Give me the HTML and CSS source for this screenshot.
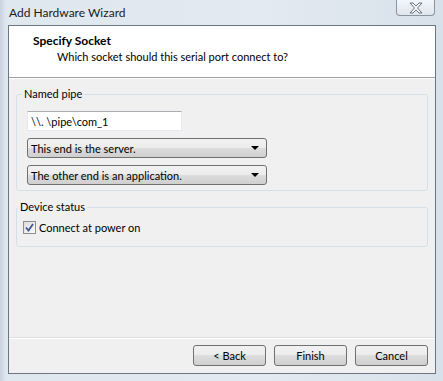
FILE: index.html
```html
<!DOCTYPE html>
<html>
<head>
<meta charset="utf-8">
<link rel="stylesheet" href="styles.css">
</head>
<body>
<div class="window">
  <div class="titlebar">
    <span class="title">Add Hardware Wizard</span>
    <div class="close">
      <svg width="16" height="12" viewBox="0 0 16 12">
        <path d="M2 1 L5 1 L8 4 L11 1 L14 1 L9.5 6 L14 11 L11 11 L8 8 L5 11 L2 11 L6.5 6 Z" fill="#f4f6f8" stroke="#6a7480" stroke-width="1" stroke-linejoin="round"/>
      </svg>
    </div>
  </div>
  <div class="client">
    <div class="header">
      <div class="h-title">Specify Socket</div>
      <div class="h-sub">Which socket should this serial port connect to?</div>
    </div>
    <div class="content">
      <fieldset class="group group-pipe">
        <legend>Named pipe</legend>
        <div class="textbox">\\. \pipe\com_1</div>
        <div class="select"><span>This end is the server.</span><span class="arrow"></span></div>
        <div class="select"><span>The other end is an application.</span><span class="arrow"></span></div>
      </fieldset>
      <fieldset class="group group-status">
        <legend>Device status</legend>
        <div class="check-row">
          <span class="checkbox">
            <svg width="9" height="9" viewBox="0 0 9 9"><path d="M1 4.5 L3.5 7.5 L8 1" fill="none" stroke="#3d5a95" stroke-width="1.8"/></svg>
          </span>
          <span>Connect at power on</span>
        </div>
      </fieldset>
    </div>
    <div class="footer">
      <button class="btn">&lt; Back</button>
      <button class="btn">Finish</button>
      <button class="btn">Cancel</button>
    </div>
  </div>
</div>
</body>
</html>
```
FILE: styles.css
```css
html, body {
  margin: 0;
  padding: 0;
}
body {
  width: 443px;
  height: 381px;
  overflow: hidden;
  font-family: Lato, "Liberation Sans", Arial, sans-serif;
  font-size: 11px;
  color: #000;
}
.window {
  width: 443px;
  height: 381px;
  box-sizing: border-box;
  background: linear-gradient(90deg, #c9d3dd 0px, #dfe7ef 6px, #e3eaf1 60%, #d8e1ea 100%);
  display: flex;
  flex-direction: column;
}
.titlebar {
  height: 25px;
  display: flex;
  align-items: flex-start;
  justify-content: space-between;
  padding-left: 9px;
  padding-right: 8px;
}
.title {
  margin-top: 5px;
  font-size: 12px;
  color: #1b1b1b;
}
.close {
  width: 39px;
  height: 16px;
  box-sizing: border-box;
  border: 1px solid #8a949e;
  border-top: none;
  border-radius: 0 0 4px 4px;
  background: linear-gradient(#f3f6f9, #dfe6ed);
  display: flex;
  align-items: center;
  justify-content: center;
}
.client {
  margin: 0 7px 7px 8px;
  height: 349px;
  box-sizing: border-box;
  border: 1px solid #6a7684;
  background: #f0f0f0;
  display: flex;
  flex-direction: column;
}
.header {
  height: 52px;
  box-sizing: border-box;
  background: #fff;
  border-bottom: 1px solid #a0a0a0;
  padding-left: 24px;
  padding-top: 7px;
}
.h-title {
  font-weight: bold;
  font-size: 12px;
  line-height: 15px;
}
.h-sub {
  padding-left: 24px;
  line-height: 16px;
  margin-top: 1px;
}
.content {
  flex: 1;
  border-top: 1px solid #fff;
  padding: 8px 7px 0 7px;
}
.group {
  margin: 0;
  border: 1px solid #d5dfe5;
  border-radius: 3px;
  padding: 0 0 0 10px;
  min-inline-size: 0;
}
.group legend {
  padding: 0 2px;
  margin-left: -5px;
  line-height: 14px;
  color: #000;
}
.group-pipe {
  height: 104px;
  box-sizing: border-box;
  display: flex;
  flex-direction: column;
  gap: 7px;
  padding-top: 10px;
}
.textbox {
  width: 155px;
  height: 20px;
  box-sizing: border-box;
  background: #fff;
  border: 1px solid #e3e9ef;
  border-top-color: #abadb3;
  padding: 2px 0 0 3px;
  line-height: 15px;
}
.select {
  width: 240px;
  height: 20px;
  box-sizing: border-box;
  border: 1px solid #707070;
  border-radius: 3px;
  background: linear-gradient(#f2f2f2 0%, #ebebeb 50%, #dddddd 50%, #cfcfcf 100%);
  display: flex;
  align-items: center;
  justify-content: space-between;
  padding: 0 7px 0 3px;
}
.arrow {
  width: 0;
  height: 0;
  border-left: 4px solid transparent;
  border-right: 4px solid transparent;
  border-top: 4px solid #000;
}
.group-status {
  margin-top: 9px;
  height: 47px;
  box-sizing: border-box;
  padding-left: 6px;
  padding-top: 7px;
}
.check-row {
  display: flex;
  align-items: center;
  gap: 3px;
}
.checkbox {
  width: 13px;
  height: 13px;
  box-sizing: border-box;
  border: 1px solid #8f8f8f;
  background: linear-gradient(135deg, #dcdcdc, #fbfbfb);
  display: flex;
  align-items: center;
  justify-content: center;
}
.footer {
  height: 36px;
  box-sizing: border-box;
  border-top: 1px solid #dfdfdf;
  box-shadow: inset 0 1px 0 #fff;
  display: flex;
  justify-content: flex-end;
  align-items: flex-start;
  gap: 8px;
  padding: 7px 7px 0 0;
}
.btn {
  width: 73px;
  height: 21px;
  box-sizing: border-box;
  border: 1px solid #707070;
  border-radius: 3px;
  background: linear-gradient(#f2f2f2 0%, #ebebeb 50%, #dddddd 50%, #cfcfcf 100%);
  font-family: Lato, "Liberation Sans", Arial, sans-serif;
  font-size: 11px;
  color: #000;
  padding: 0;
  margin: 0;
}
```
